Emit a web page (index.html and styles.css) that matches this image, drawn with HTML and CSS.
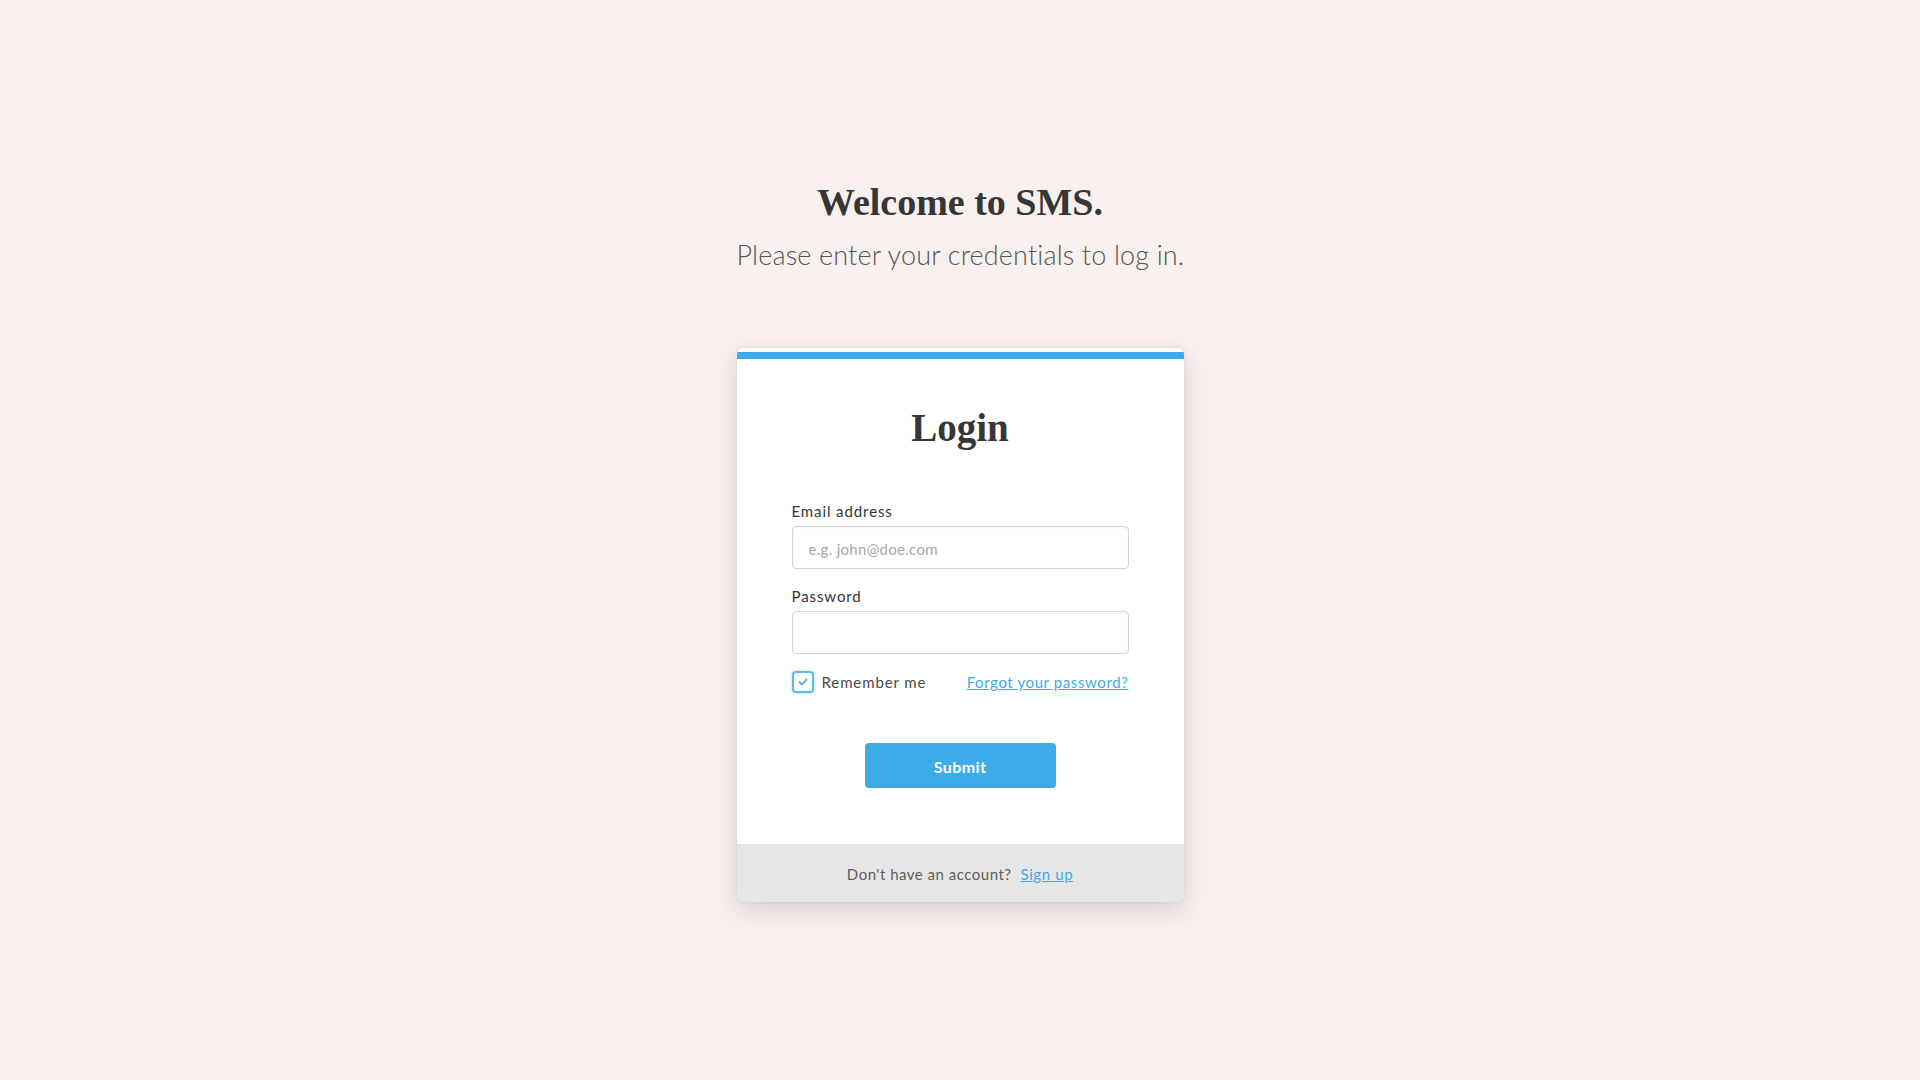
FILE: index.html
```html
<!DOCTYPE html>
<html lang="en">
<head>
<meta charset="utf-8">
<title>SMS Login</title>
<link rel="stylesheet" href="styles.css">
</head>
<body>
<main class="page">
  <header class="intro">
    <h1 class="title">Welcome to SMS.</h1>
    <p class="subtitle">Please enter your credentials to log in.</p>
  </header>
  <section class="card">
    <div class="card-bar"></div>
    <div class="card-body">
      <h2 class="card-title">Login</h2>
      <form class="form">
        <div class="field">
          <label class="label">Email address</label>
          <input class="input" type="email" placeholder="e.g. john@doe.com">
        </div>
        <div class="field">
          <label class="label">Password</label>
          <input class="input" type="password">
        </div>
        <div class="options">
          <label class="remember">
            <span class="checkbox">
              <svg viewBox="0 0 12 12" width="12" height="12"><path d="M2.5 6.2 L5 8.5 L9.5 3.5" fill="none" stroke="#3eaae8" stroke-width="1.8" stroke-linecap="round" stroke-linejoin="round"/></svg>
            </span>
            <span class="remember-text">Remember me</span>
          </label>
          <a class="link" href="#">Forgot your password?</a>
        </div>
        <div class="actions">
          <button class="button" type="button">Submit</button>
        </div>
      </form>
    </div>
    <footer class="card-footer">
      <span class="footer-text">Don't have an account?</span>
      <a class="link" href="#">Sign up</a>
    </footer>
  </section>
</main>
</body>
</html>
```

FILE: styles.css
```css
html, body {
  margin: 0;
  padding: 0;
}
body {
  background: #f8f0ee;
  font-family: "Lato", "Open Sans", sans-serif;
  color: #363636;
  min-height: 1080px;
}
.page {
  display: flex;
  flex-direction: column;
  align-items: center;
  padding-top: 179px;
}
.intro {
  text-align: center;
  width: 447px;
}
.title {
  margin: 0;
  font-family: "Liberation Serif", serif;
  font-weight: 700;
  font-size: 38px;
  line-height: 46px;
  color: #363636;
}
.subtitle {
  margin: 14px 0 0;
  font-weight: 300;
  font-size: 27px;
  line-height: 32px;
  color: #555;
  letter-spacing: 0.15px;
  white-space: nowrap;
}
.card {
  margin-top: 77px;
  width: 447px;
  background: #fff;
  border-radius: 6px;
  box-shadow: 0 8px 24px rgba(120, 90, 90, 0.22), 0 0 3px rgba(120, 90, 90, 0.12);
  overflow: hidden;
  padding-top: 4px;
}
.card-bar {
  height: 7px;
  background: #3eaae8;
}
.card-body {
  padding: 45px 55px 56px;
}
.card-title {
  margin: 0;
  text-align: center;
  font-family: "Liberation Serif", serif;
  font-weight: 700;
  font-size: 39px;
  line-height: 48px;
  color: #363636;
}
.form {
  margin-top: 49px;
}
.field {
  margin-bottom: 17px;
}
.label {
  display: block;
  font-size: 15px;
  line-height: 20px;
  margin-bottom: 5px;
  color: #363636;
  letter-spacing: 0.9px;
}
.input {
  display: block;
  box-sizing: border-box;
  width: 100%;
  height: 43px;
  border: 1px solid #d3d3d3;
  border-radius: 4px;
  padding: 3px 16px 0;
  font-family: "Lato", sans-serif;
  font-size: 15px;
  color: #363636;
  background: #fff;
  box-shadow: inset 0 1px 2px rgba(10, 10, 10, 0.05);
  outline: none;
}
.input::placeholder {
  color: #a8a8a8;
  letter-spacing: 0.3px;
}
.options {
  display: flex;
  justify-content: space-between;
  align-items: center;
  margin-top: 1px;
  height: 22px;
}
.remember {
  display: flex;
  align-items: center;
  gap: 8px;
}
.checkbox {
  box-sizing: border-box;
  width: 22px;
  height: 22px;
  border: 2px solid #5cb8ef;
  border-radius: 4px;
  display: flex;
  align-items: center;
  justify-content: center;
  box-shadow: 0 0 3px rgba(62, 170, 232, 0.55);
}
.remember-text {
  font-size: 15px;
  color: #4a4a4a;
  letter-spacing: 0.9px;
  line-height: 20px;
}
.link {
  color: #3eaae8;
  font-size: 15px;
  line-height: 20px;
  text-decoration: underline;
  letter-spacing: 0.6px;
}
.actions {
  display: flex;
  justify-content: center;
  margin-top: 50px;
}
.button {
  width: 191px;
  height: 45px;
  border: none;
  border-radius: 4px;
  background: #3eaae8;
  color: #fff;
  font-family: "Lato", sans-serif;
  font-weight: 700;
  font-size: 16px;
  letter-spacing: 0.4px;
  padding-top: 2px;
}
.card-footer {
  height: 58px;
  background: #e6e6e6;
  display: flex;
  justify-content: center;
  align-items: center;
  gap: 9px;
  padding-top: 2px;
  box-sizing: border-box;
}
.footer-text {
  font-size: 15px;
  line-height: 20px;
  color: #5e5e5e;
  letter-spacing: 0.5px;
}
```
